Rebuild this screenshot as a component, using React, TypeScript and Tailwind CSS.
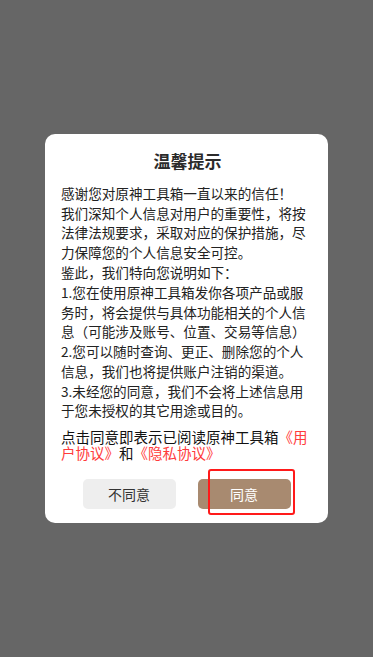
import React from "react";

export default function App() {
  return (
    <div
      className="flex h-screen w-full items-center justify-center bg-[#666666]"
      style={{ fontFamily: '"Noto Sans CJK SC", "Noto Sans", sans-serif' }}
    >
      <div className="flex w-[283px] flex-col rounded-[10px] bg-white pb-[14px] pl-4 pr-[14px] pt-[15px]">
        <div className="text-center text-[17px] font-bold leading-[24px] text-[#2b2b2b]">
          温馨提示
        </div>
        <div className="mt-[11px] text-[13.6px] leading-[19.8px] text-[#222222]">
          <p>感谢您对原神工具箱一直以来的信任！</p>
          <p>我们深知个人信息对用户的重要性，将按法律法规要求，采取对应的保护措施，尽力保障您的个人信息安全可控。</p>
          <p>鉴此，我们特向您说明如下：</p>
          <p>1.您在使用原神工具箱发你各项产品或服务时，将会提供与具体功能相关的个人信息（可能涉及账号、位置、交易等信息）</p>
          <p>2.您可以随时查询、更正、删除您的个人信息，我们也将提供账户注销的渠道。</p>
          <p>3.未经您的同意，我们不会将上述信息用于您未授权的其它用途或目的。</p>
        </div>
        <p className="mt-[8px] text-[14.5px] leading-[16px] text-[#111111]">
          点击同意即表示已阅读原神工具箱<span className="text-[#ff3b3b]">《用户协议》</span>和<span className="text-[#ff3b3b]">《隐私协议》</span>
        </p>
        <div className="mt-[18px] flex justify-center gap-[22px] pr-[2px]">
          <button className="h-[30px] w-[93px] rounded-[5px] bg-[#eeeeee] text-[14px] text-[#333333]">
            不同意
          </button>
          <div className="relative">
            <button className="h-[30px] w-[93px] rounded-[5px] bg-[#a88a70] text-[14px] text-white">
              同意
            </button>
            <div className="pointer-events-none absolute left-[10px] top-[-10px] h-[46px] w-[87px] rounded-[3px] border-2 border-[#ff1a1a]" />
          </div>
        </div>
      </div>
    </div>
  );
}
